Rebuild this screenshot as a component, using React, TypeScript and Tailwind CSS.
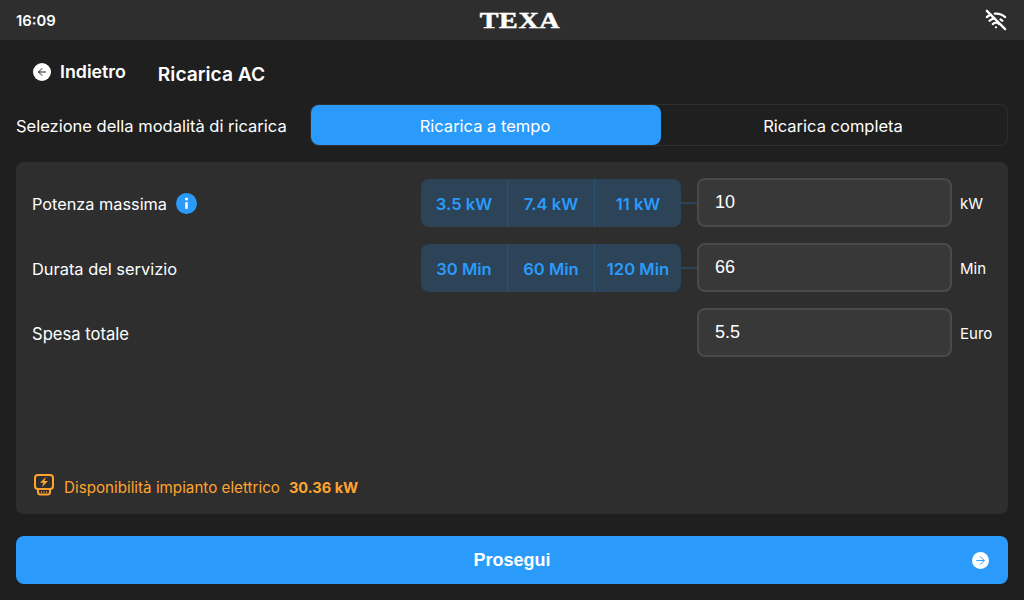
import { ArrowLeft, ArrowRight, WifiOff } from "lucide-react";

const inter = "font-['Inter','Liberation_Sans',sans-serif]";

function Presets({ items }: { items: string[] }) {
  return (
    <div className="flex h-12 w-[260px] rounded-lg bg-[#2c4358] overflow-hidden">
      {items.map((item, i) => (
        <button
          key={item}
          className={`flex-1 flex items-center justify-center pt-1 text-[16.6px] font-semibold text-[#2a9bfb] ${
            i > 0 ? "border-l border-[#2a5473]" : ""
          }`}
        >
          {item}
        </button>
      ))}
    </div>
  );
}

function ValueBox({ value, unit }: { value: string; unit: string }) {
  return (
    <div className="flex items-center">
      <div className="h-[49px] w-[255px] rounded-lg border-2 border-[#4a4a4a] bg-[#383838] pl-4 pb-0.5 flex items-center font-['Liberation_Sans',sans-serif] text-lg text-white">
        {value}
      </div>
      <span className="ml-2 pt-1 text-[15px] text-white">{unit}</span>
    </div>
  );
}

export default function App() {
  return (
    <div className={`w-[1024px] h-[600px] bg-[#1f1f1f] flex flex-col overflow-hidden text-white ${inter}`}>
      {/* Top bar */}
      <div className="h-10 shrink-0 bg-[#2e2e2e] flex items-center justify-between pl-4 pr-[17px]">
        <span className="w-24 pt-0.5 text-[14.8px] font-semibold">16:09</span>
        <span className="font-['Liberation_Serif',serif] font-bold text-[23px] leading-none tracking-[0.5px] scale-x-[1.22] [-webkit-text-stroke:0.5px_white]">
          TEXA
        </span>
        <div className="w-20 flex justify-end">
          <WifiOff size={22} strokeWidth={2.5} />
        </div>
      </div>

      {/* Header */}
      <div className="flex items-center h-16 pl-[33px]">
        <button className="flex items-center gap-[9px] font-semibold text-[17.8px]">
          <span className="w-[18px] h-[18px] rounded-full bg-white flex items-center justify-center">
            <ArrowLeft size={12} strokeWidth={2} className="text-[#1f1f1f]" />
          </span>
          <span>Indietro</span>
        </button>
        <h1 className="ml-8 mt-[5px] text-[19.2px] font-semibold">Ricarica AC</h1>
      </div>

      {/* Mode selection */}
      <div className="flex items-center mx-4">
        <span className="w-[294px] pt-0.5 text-[16.5px]">Selezione della modalità di ricarica</span>
        <div className="flex-1 flex h-[42px] rounded-lg border border-[#2e2e2e]">
          <button className="w-[350px] rounded-lg bg-[#2a9bfb] pt-0.5 pr-0.5 text-[16.5px]">Ricarica a tempo</button>
          <button className="flex-1 pt-0.5 pr-0.5 text-[16.5px]">Ricarica completa</button>
        </div>
      </div>

      {/* Settings panel */}
      <div className="mx-4 mt-4 h-[352px] rounded-lg bg-[#2e2e2e] pt-4 pl-4 flex flex-col">
        <div className="flex items-center">
          <div className="w-[389px] flex items-center gap-[9px] pt-0.5 text-[16.3px]">
            <span className="pt-0.5">Potenza massima</span>
            <svg width="21" height="21" viewBox="0 0 21 21">
              <circle cx="10.5" cy="10.5" r="10.5" fill="#2a9bfb" />
              <circle cx="10.5" cy="6" r="1.5" fill="#ffffff" />
              <rect x="9.25" y="9" width="2.5" height="7" rx="1" fill="#ffffff" />
            </svg>
          </div>
          <Presets items={["3.5 kW", "7.4 kW", "11 kW"]} />
          <div className="w-4 h-0.5 bg-[#2c4358]" />
          <ValueBox value="10" unit="kW" />
        </div>
        <div className="flex items-center mt-4">
          <div className="w-[389px] text-[16.4px] pt-[3px]">Durata del servizio</div>
          <Presets items={["30 Min", "60 Min", "120 Min"]} />
          <div className="w-4 h-0.5 bg-[#2c4358]" />
          <ValueBox value="66" unit="Min" />
        </div>
        <div className="flex items-center mt-4">
          <div className="w-[665px] text-[16.6px] pt-[3px]">Spesa totale</div>
          <ValueBox value="5.5" unit="Euro" />
        </div>

        <div className="mt-auto mb-[14px] flex items-center text-[15.2px] text-[#ffa42e]">
          <svg width="20" height="22" viewBox="0 0 20 22" fill="none" stroke="currentColor" strokeWidth="2" className="ml-[2px] mr-[10px] -mt-[7px]">
            <rect x="1" y="1" width="18" height="14" rx="3" />
            <path d="M4 15v3a2.5 2.5 0 0 0 2.5 2.5h7A2.5 2.5 0 0 0 16 18v-3" />
            <path d="M7 18h1M9.5 18h1M12 18h1" strokeWidth="1.5" />
            <path d="M11.8 3 6 8.8h3.4L8 13l6-6h-3.4z" fill="currentColor" stroke="none" />
          </svg>
          <span>Disponibilità impianto elettrico</span>
          <span className="ml-[9px] text-[14.6px] font-bold">30.36 kW</span>
        </div>
      </div>

      {/* Continue */}
      <button className="relative mx-4 mt-[22px] h-12 rounded-lg bg-[#2a9bfb] font-['Liberation_Sans',sans-serif] font-bold text-lg flex items-center justify-center">
        Prosegui
        <span className="absolute right-[19px] top-[16px] w-[17px] h-[17px] rounded-full bg-white flex items-center justify-center">
          <ArrowRight size={13} strokeWidth={1.75} className="text-[#2a9bfb]" />
        </span>
      </button>
    </div>
  );
}
